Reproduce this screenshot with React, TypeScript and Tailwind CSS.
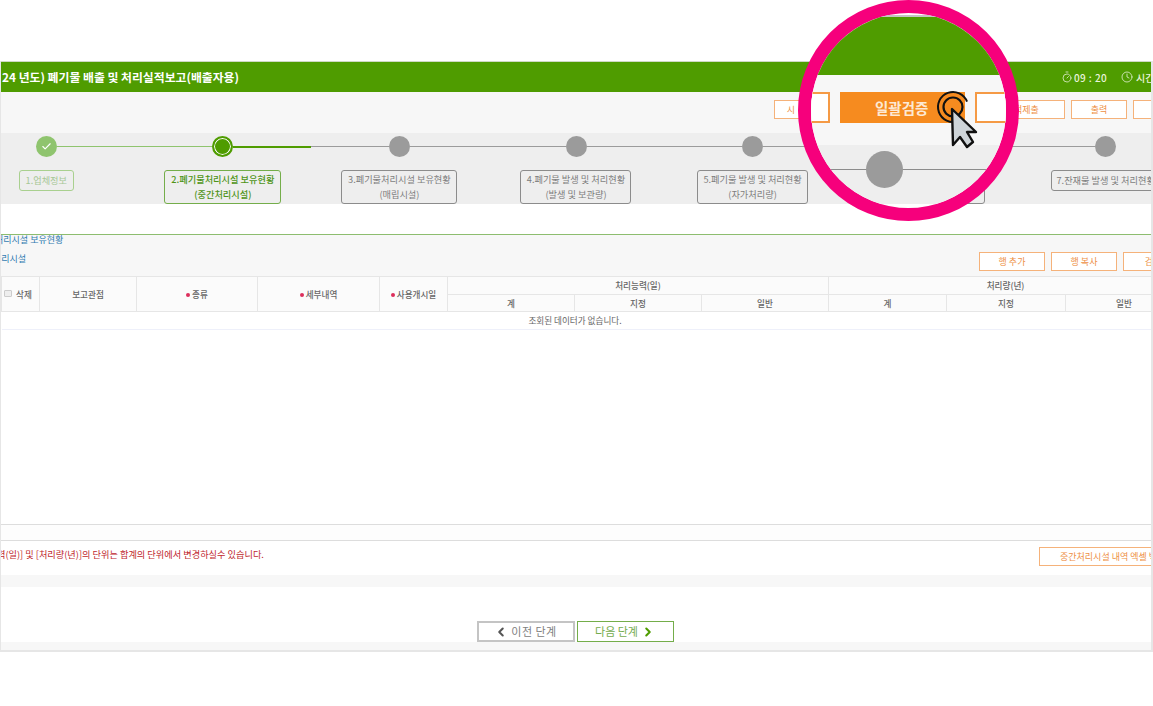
import { ChevronLeft, ChevronRight, Check, Clock, Timer } from 'lucide-react';
import type { ReactNode } from 'react';

const steps = [
  { lines: ['1.업체정보'], box: 'w-[55px] h-[21px] border-[#a9d08f] text-[#a6c795]' },
  { lines: ['2.폐기물처리시설 보유현황', '(중간처리시설)'], box: 'w-[117px] h-[34px] border-[#74ad4a] text-[#4f9417] font-medium' },
  { lines: ['3.폐기물처리시설 보유현황', '(매립시설)'], box: 'w-[116px] h-[34px] border-[#8c8c8c] text-[#7d7d7d]' },
  { lines: ['4.폐기물 발생 및 처리현황', '(발생 및 보관량)'], box: 'w-[111px] h-[34px] border-[#8c8c8c] text-[#7d7d7d]' },
  { lines: ['5.폐기물 발생 및 처리현황', '(자가처리량)'], box: 'w-[111px] h-[34px] border-[#8c8c8c] text-[#7d7d7d]' },
  { lines: [], box: 'w-[111px] h-[34px] border-[#8c8c8c]' },
  { lines: ['7.잔재물 발생 및 처리현황'], box: 'w-[110px] h-[21px] border-[#8c8c8c] text-[#7d7d7d]' },
];

function Step({ index }: { index: number }) {
  const step = steps[index];
  const left = index === 0 ? 'bg-transparent' : index < 2 ? 'bg-[#8fc46e]' : 'bg-[#9b9b9b]';
  const right = index === 0 ? 'h-px bg-[#8fc46e]' : index === 1 ? 'h-[2px] bg-[#4f9c00]' : index === 6 ? 'bg-transparent' : 'h-px bg-[#9b9b9b]';

  return (
    <div className="flex flex-col items-center">
      <div className="flex h-[21px] w-full items-center">
        <div className={`h-px flex-1 ${left}`} />
        {index === 0 && (
          <div className="flex size-[21px] items-center justify-center rounded-full bg-[#8fc46e]">
            <Check className="size-[11px] text-white" strokeWidth={2.5} />
          </div>
        )}
        {index === 1 && <div className="size-[21px] rounded-full border-2 border-[#4f9c00] bg-[#4f9c00] shadow-[inset_0_0_0_1px_#fff]" />}
        {index > 1 && <div className="size-[21px] rounded-full bg-[#9b9b9b]" />}
        <div className={`flex-1 ${right}`} />
      </div>
      <div className={`mt-[13px] flex flex-col items-center justify-center whitespace-nowrap rounded-[3px] border bg-[#eeeeee] text-[9.2px] leading-[15px] ${step.box}`}>
        {step.lines.map((line) => (
          <span key={line}>{line}</span>
        ))}
      </div>
    </div>
  );
}

function OrangeButton({ className, children }: { className: string; children?: ReactNode }) {
  return (
    <button type="button" className={`h-[19px] shrink-0 whitespace-nowrap border border-[#f5b27a] bg-white text-[9px] text-[#ee8f45] ${className}`}>
      {children}
    </button>
  );
}

function Required() {
  return <span className="mr-[2px] inline-block size-[4px] rounded-full bg-[#dc2f5c] align-middle" />;
}

const th = 'border border-[#e6e6e6] bg-[#fbfbfb] p-0 text-[8.6px] font-medium text-[#666666]';

function Magnifier() {
  return (
    <div className="absolute left-[798px] top-0 size-[221px] overflow-hidden rounded-full border-[13px] border-[#f6007c] bg-white">
      <div className="flex h-full flex-col">
        <div className="h-[4px] shrink-0 border-b-2 border-[#c4c4c4]" />
        <div className="h-[58px] shrink-0 bg-[#4f9c00]" />
        <div className="flex h-[70px] shrink-0 items-start bg-[#f7f7f7] pt-[17px]">
          <div className="h-[31px] w-[19px] shrink-0 border-y-2 border-r-2 border-[#f59a45] bg-white" />
          <div className="ml-[10px] flex h-[31px] w-[125px] shrink-0 items-center bg-[#f68b1f] pl-[35px] text-[14.5px] font-bold text-[#fde9d4]">일괄검증</div>
          <div className="ml-[10px] h-[31px] w-[60px] shrink-0 border-2 border-[#f59a45] bg-white" />
        </div>
        <div className="relative h-[59px] shrink-0 bg-[#eeeeee]">
          <div className="absolute inset-x-0 top-[24px] h-px bg-[#8c8c8c]" />
          <div className="absolute left-[55px] top-[6px] size-[37px] rounded-full bg-[#9b9b9b]" />
        </div>
      </div>
    </div>
  );
}

function Pointer() {
  return (
    <svg className="absolute left-[930px] top-[85px]" width="52" height="68" viewBox="0 0 52 68" fill="none">
      <circle cx="23" cy="22" r="15" stroke="#111" strokeWidth="2" strokeDasharray="70 24" transform="rotate(70 23 22)" />
      <circle cx="23" cy="22" r="9.5" fill="#f68b1f" stroke="#111" strokeWidth="2.2" />
      <path d="M22 24 L23 60 L30 52 L37 62 L43 57 L37 47 L46 47 Z" fill="#ced4d8" stroke="#111" strokeWidth="2.4" strokeLinejoin="round" />
    </svg>
  );
}

export default function App() {
  return (
    <div className="relative h-[706px] w-[1153px] overflow-hidden bg-white font-['Noto_Sans_CJK_KR','Liberation_Sans',sans-serif]">
      <div className="mt-[61px] flex h-[591px] w-full flex-col overflow-hidden border-b-2 border-l border-r-2 border-[#e6e6e6]">
        <header className="flex h-[31px] shrink-0 items-center border-t border-[#cfd9c4] bg-[#4f9c00] pl-px text-white">
          <h1 className="whitespace-nowrap text-[11.85px] font-bold">24 년도) 폐기물 배출 및 처리실적보고(배출자용)</h1>
          <div className="ml-auto flex w-[90px] shrink-0 items-center overflow-hidden whitespace-nowrap text-[10px] font-medium text-[#eaf4dd]">
            <Timer className="size-[12px] shrink-0" strokeWidth={1.5} />
            <span className="ml-[1px] w-[47px] shrink-0 tracking-[0.4px]">09 : 20</span>
            <Clock className="size-[12px] shrink-0" strokeWidth={1.5} />
            <span className="ml-[3px]">시간</span>
          </div>
        </header>

        <div className="flex h-[41px] shrink-0 gap-[6px] bg-[#f7f7f7] pl-[773px] pt-[8px]">
          <OrangeButton className="w-[56px] pr-[22px]">시</OrangeButton>
          <OrangeButton className="ml-[139px] w-[90px] pl-[38px] text-left">적제출</OrangeButton>
          <OrangeButton className="w-[56px]">출력</OrangeButton>
          <OrangeButton className="w-[56px]" />
        </div>

        <div className="h-[71px] shrink-0 overflow-hidden bg-[#eeeeee] pt-[3px]">
          <div className="-ml-[43px] grid w-[1236px] grid-cols-7">
            {steps.map((_, index) => (
              <Step key={index} index={index} />
            ))}
          </div>
        </div>

        <div className="h-[30px] shrink-0 bg-white" />

        <section className="h-[42px] shrink-0 border-t border-[#8dbd6f] bg-[#f7f7f7] text-[9px] text-[#2f7ab0]">
          <div className="-ml-[6px] mt-[-2px] leading-[14px]">처리시설 보유현황</div>
          <div className="mt-[5px] flex w-[1188px] items-start">
            <span className="-ml-[8px] leading-[14px]">처리시설</span>
            <div className="ml-auto flex gap-[6px]">
              <OrangeButton className="w-[66px]">행 추가</OrangeButton>
              <OrangeButton className="w-[66px]">행 복사</OrangeButton>
              <OrangeButton className="w-[66px] pr-[14px]">검</OrangeButton>
            </div>
          </div>
        </section>

        <div className="h-[249px] shrink-0 overflow-hidden border-b border-[#dddddd] bg-white">
          <table className="w-[1181px] table-fixed border-collapse">
            <colgroup>
              <col className="w-[38px]" />
              <col className="w-[97px]" />
              <col className="w-[121px]" />
              <col className="w-[122px]" />
              <col className="w-[68px]" />
              <col className="w-[127px]" />
              <col className="w-[127px]" />
              <col className="w-[127px]" />
              <col className="w-[118px]" />
              <col className="w-[119px]" />
              <col className="w-[117px]" />
            </colgroup>
            <thead>
              <tr className="h-[18px]">
                <th rowSpan={2} className={`${th} pl-[2px] text-left`}>
                  <span className="flex items-center gap-[4px]">
                    <span className="h-[7px] w-[8px] rounded-[1px] border border-[#cccccc] bg-[#eeeeee]" />
                    삭제
                  </span>
                </th>
                <th rowSpan={2} className={th}>보고관점</th>
                <th rowSpan={2} className={th}><Required />종류</th>
                <th rowSpan={2} className={th}><Required />세부내역</th>
                <th rowSpan={2} className={th}><Required />사용개시일</th>
                <th colSpan={3} className={th}>처리능력(일)</th>
                <th colSpan={3} className={th}>처리량(년)</th>
              </tr>
              <tr className="h-[17px]">
                <th className={th}>계</th>
                <th className={th}>지정</th>
                <th className={th}>일반</th>
                <th className={th}>계</th>
                <th className={th}>지정</th>
                <th className={th}>일반</th>
              </tr>
            </thead>
            <tbody>
              <tr className="h-[18px] border-b border-[#eef0fa]">
                <td colSpan={11} className="pr-[34px] text-center text-[8.6px] text-[#666666]">조회된 데이터가 없습니다.</td>
              </tr>
            </tbody>
          </table>
        </div>

        <div className="h-[16px] shrink-0 border-b border-[#dddddd] bg-[#fdfdfd]" />

        <div className="flex h-[34px] w-[1171px] shrink-0 items-start justify-between bg-white pt-[6px]">
          <p className="-ml-[4px] whitespace-nowrap text-[9.2px] leading-[14px] text-[#c0272d]">력(일)] 및 [처리량(년)]의 단위는 합계의 단위에서 변경하실수 있습니다.</p>
          <OrangeButton className="w-[133px] pl-[20px] text-left">중간처리시설 내역 엑셀 백업</OrangeButton>
        </div>

        <div className="h-[12px] shrink-0 bg-[#f7f7f7]" />

        <div className="flex h-[55px] shrink-0 items-end justify-center gap-[2px] bg-white pr-[2px]">
          <button type="button" className="flex h-[21px] w-[98px] items-center justify-center gap-[3px] border-2 border-[#c4c4c4] bg-white text-[11px] tracking-[0.5px] text-[#808080]">
            <ChevronLeft className="size-[14px] text-[#555555]" strokeWidth={3.5} />
            이전 단계
          </button>
          <button type="button" className="flex h-[21px] w-[97px] items-center justify-center gap-[3px] border border-[#74ad4a] bg-white text-[11px] text-[#73ab4d]">
            다음 단계
            <ChevronRight className="size-[14px] text-[#4f9c00]" strokeWidth={3.5} />
          </button>
        </div>

        <div className="flex-1 bg-[#f7f7f7]" />
      </div>

      <Magnifier />
      <Pointer />
    </div>
  );
}
